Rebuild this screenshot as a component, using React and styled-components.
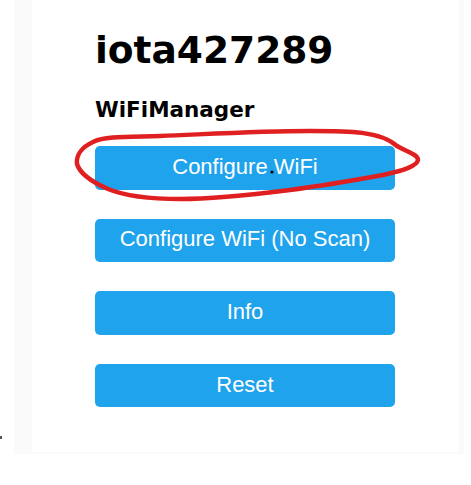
import React from "react";
import styled, { createGlobalStyle } from "styled-components";

const buttons = ["Configure WiFi", "Configure WiFi (No Scan)", "Info", "Reset"];

export default function App() {
  return (
    <Page>
      <GlobalStyle />
      <Frame>
        <Panel>
          <Title>iota427289</Title>
          <SubTitle>WiFiManager</SubTitle>
          <ButtonList>
            {buttons.map((label) => (
              <MenuButton key={label}>{label}</MenuButton>
            ))}
          </ButtonList>
        </Panel>
      </Frame>

      {/* hand drawn marking over the first button */}
      <Scribble width="471" height="485" viewBox="0 0 471 485">
        <path
          d="M 93 142 C 105 136, 130 137, 160 136 C 210 134, 260 131, 310 131 C 350 131, 380 131, 397 146 C 407 152, 418 154, 418 160 C 417 166, 405 170, 383 175 C 350 181, 320 186, 290 190 C 250 195, 210 199, 180 199 C 150 199, 125 196, 108 189 C 92 182, 80 174, 77 164 C 76 155, 82 147, 93 142 Z"
          fill="none"
          stroke="#e02020"
          strokeWidth="4.5"
          strokeLinecap="round"
          strokeLinejoin="round"
        />
        <circle cx="272" cy="172" r="1.6" fill="#000" />
        <rect x="0" y="436" width="2" height="3" fill="#555" />
      </Scribble>
    </Page>
  );
}

const GlobalStyle = createGlobalStyle`
  html, body {
    margin: 0;
    padding: 0;
    background: #ffffff;
  }
`;

const Page = styled.div`
  position: relative;
  width: 471px;
  height: 485px;
  overflow: hidden;
`;

const Frame = styled.div`
  margin-left: 14px;
  width: 450px;
  height: 454px;
  background: #fafafa;
  padding-right: 5px;
  box-sizing: border-box;
`;

const Panel = styled.div`
  margin-left: 18px;
  height: 452px;
  background: #ffffff;
  padding: 28px 0 0 63px;
  box-sizing: border-box;
  display: flex;
  flex-direction: column;
`;

const Title = styled.h1`
  margin: 0;
  font-family: "DejaVu Sans", sans-serif;
  font-weight: 700;
  font-size: 37.5px;
  line-height: 44px;
  color: #000;
`;

const SubTitle = styled.h3`
  margin: 25px 0 0;
  font-family: "DejaVu Sans", sans-serif;
  font-weight: 700;
  font-size: 21.5px;
  line-height: 25px;
  color: #000;
`;

const ButtonList = styled.div`
  margin-top: 24px;
  display: flex;
  flex-direction: column;
  gap: 29px;
  width: 300px;
`;

const MenuButton = styled.button`
  border: 0;
  border-radius: 5px;
  background-color: #1fa3ec;
  color: #fff;
  width: 100%;
  height: 43.6px;
  padding: 0 0 2px;
  font-family: "Liberation Sans", Arial, sans-serif;
  font-size: 22px;
  line-height: 40px;
  text-align: center;
`;

const Scribble = styled.svg`
  position: absolute;
  left: 0;
  top: 0;
  pointer-events: none;
`;
